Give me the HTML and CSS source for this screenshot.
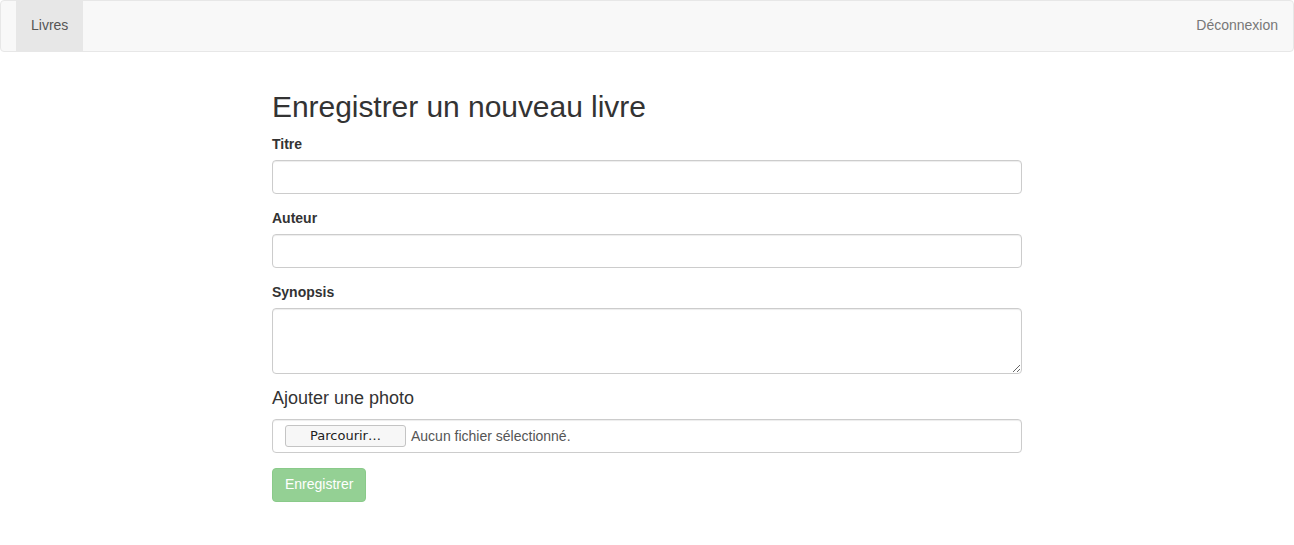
FILE: index.html
```html
<!DOCTYPE html>
<html lang="fr">
<head>
<meta charset="utf-8">
<title>Enregistrer un nouveau livre</title>
<link rel="stylesheet" href="styles.css">
</head>
<body>
<nav class="navbar">
  <ul class="nav-left">
    <li class="active"><a href="#">Livres</a></li>
  </ul>
  <ul class="nav-right">
    <li><a href="#">Déconnexion</a></li>
  </ul>
</nav>
<main class="container">
  <div class="col">
    <h2 class="title">Enregistrer un nouveau livre</h2>
    <form>
      <div class="form-group">
        <label class="label" for="titre">Titre</label>
        <input class="form-control" id="titre" type="text">
      </div>
      <div class="form-group">
        <label class="label" for="auteur">Auteur</label>
        <input class="form-control" id="auteur" type="text">
      </div>
      <div class="form-group">
        <label class="label" for="synopsis">Synopsis</label>
        <textarea class="form-control textarea" id="synopsis"></textarea>
      </div>
      <h4 class="subtitle">Ajouter une photo</h4>
      <div class="form-group">
        <div class="form-control file">
          <span class="file-btn">Parcourir…</span>
          <span class="file-text">Aucun fichier sélectionné.</span>
        </div>
      </div>
      <button class="btn" type="button" disabled>Enregistrer</button>
    </form>
  </div>
</main>
</body>
</html>
```
FILE: styles.css
```css
* { box-sizing: border-box; }
html, body {
  margin: 0;
  padding: 0;
}
body {
  font-family: "Liberation Sans", Arial, Helvetica, sans-serif;
  font-size: 14px;
  line-height: 1.42857143;
  color: #333;
  background: #fff;
}
.navbar {
  display: flex;
  justify-content: space-between;
  min-height: 52px;
  background: #f8f8f8;
  border: 1px solid #e7e7e7;
  border-radius: 4px;
  padding: 0 0 0 15px;
  margin-bottom: 20px;
}
.navbar ul {
  list-style: none;
  margin: 0;
  padding: 0;
  display: flex;
}
.navbar a {
  display: block;
  padding: 14px 15px 16px;
  line-height: 20px;
  color: #777;
  text-decoration: none;
}
.navbar .active a {
  background: #e7e7e7;
  color: #555;
}
.container {
  display: flow-root;
  width: 1170px;
  margin: 0 auto;
  padding: 0 15px;
}
.col {
  width: 750px;
  margin-left: 195px;
}
.title {
  font-size: 30px;
  font-weight: 500;
  line-height: 1.1;
  letter-spacing: -0.05px;
  margin: 18px 0 12px;
}
.form-group {
  margin-bottom: 15px;
}
.label {
  display: inline-block;
  font-weight: 700;
  margin-bottom: 5px;
  position: relative;
  top: -1px;
}
.form-control {
  display: block;
  width: 100%;
  height: 34px;
  padding: 6px 12px;
  font-family: inherit;
  font-size: 14px;
  line-height: 1.42857143;
  color: #555;
  background: #fff;
  border: 1px solid #ccc;
  border-radius: 4px;
  box-shadow: inset 0 1px 1px rgba(0,0,0,.075);
}
.textarea {
  height: 66px;
  resize: vertical;
}
.subtitle {
  font-size: 18px;
  font-weight: 500;
  line-height: 1.1;
  margin: 10px 0;
}
.file {
  display: flex;
  align-items: center;
  gap: 5px;
  padding: 6px 12px;
}
.file-btn {
  display: inline-block;
  width: 121px;
  height: 22px;
  line-height: 20px;
  text-align: center;
  font-family: "DejaVu Sans", sans-serif;
  font-size: 13px;
  color: #222;
  background: #f7f7f7;
  border: 1px solid #c4c4c4;
  border-radius: 3px;
}
.file-text {
  color: #555;
  font-size: 14px;
}
.btn {
  display: inline-block;
  height: 34px;
  padding: 5px 12px 7px;
  font-family: inherit;
  font-size: 14px;
  line-height: 1.42857143;
  color: #fff;
  background: #5cb85c;
  border: 1px solid #4cae4c;
  border-radius: 4px;
  opacity: .65;
  cursor: not-allowed;
}
```
